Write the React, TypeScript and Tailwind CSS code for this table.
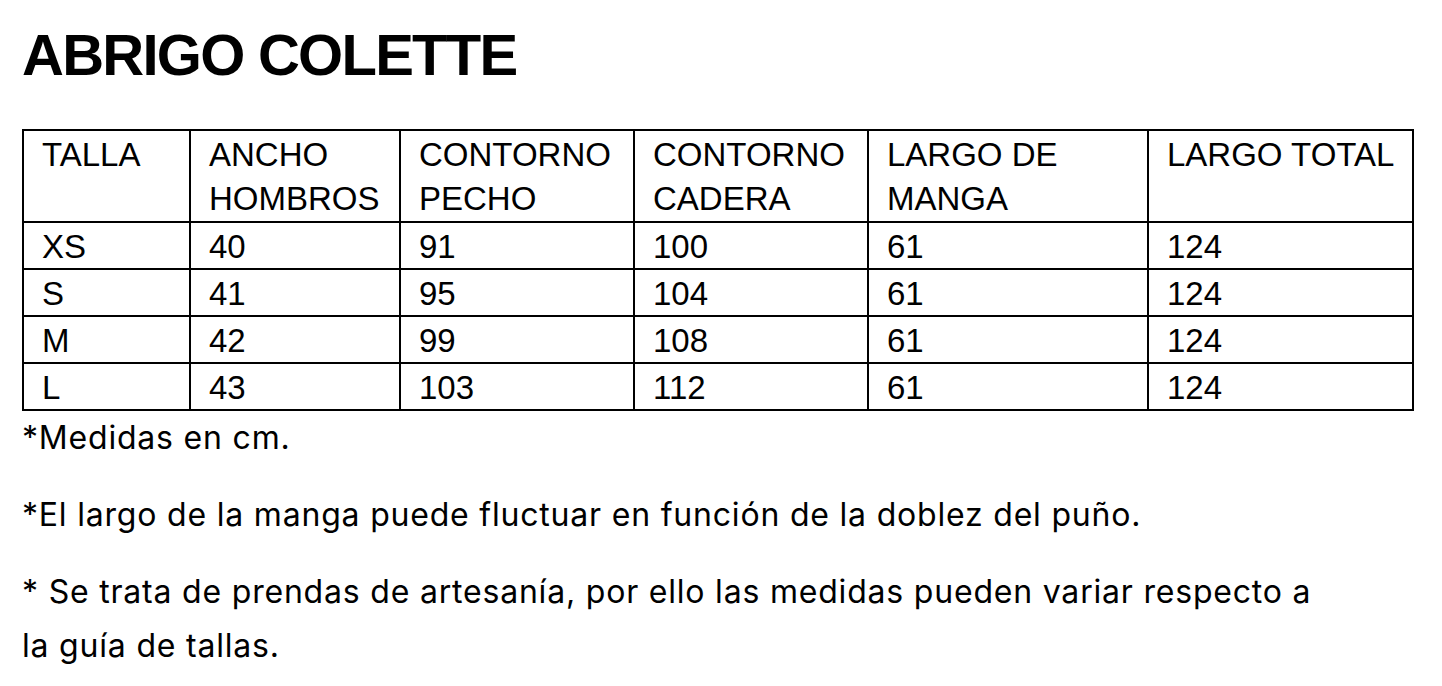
const headers = [
  ["TALLA"],
  ["ANCHO", "HOMBROS"],
  ["CONTORNO", "PECHO"],
  ["CONTORNO", "CADERA"],
  ["LARGO DE", "MANGA"],
  ["LARGO TOTAL"],
];

const rows = [
  ["XS", "40", "91", "100", "61", "124"],
  ["S", "41", "95", "104", "61", "124"],
  ["M", "42", "99", "108", "61", "124"],
  ["L", "43", "103", "112", "61", "124"],
];

const colWidths = ["w-[167px]", "w-[210px]", "w-[234px]", "w-[234px]", "w-[280px]", "w-[265px]"];

const App = () => {
  return (
    <div className="min-h-screen bg-white text-black px-[22px] pt-[25px]">
      <h1 className="font-['Liberation_Sans',Arial,sans-serif] font-bold text-[58px] leading-[60px] tracking-[-0.03em]">
        ABRIGO COLETTE
      </h1>
      <table className="mt-[44px] w-[1390px] table-fixed border-collapse border-2 border-black font-['Liberation_Sans',Arial,sans-serif] text-[33px]">
        <colgroup>
          {colWidths.map((w, i) => (
            <col key={i} className={w} />
          ))}
        </colgroup>
        <thead>
          <tr>
            {headers.map((lines, i) => (
              <th
                key={i}
                className="border-2 border-black pl-[18px] pt-[2px] text-left align-top font-normal leading-[44px] whitespace-nowrap"
              >
                {lines.map((line) => (
                  <div key={line}>{line}</div>
                ))}
              </th>
            ))}
          </tr>
        </thead>
        <tbody>
          {rows.map((row) => (
            <tr key={row[0]}>
              {row.map((cell, i) => (
                <td key={i} className="border-2 border-black pl-[18px] pt-[2px] align-top leading-[43px]">
                  {cell}
                </td>
              ))}
            </tr>
          ))}
        </tbody>
      </table>
      <div className="font-['Inter','Noto_Sans',sans-serif] text-[32px] leading-[54px] tracking-[0.025em] max-w-[1310px]">
        <p>*Medidas en cm.</p>
        <p className="mt-[23px]">*El largo de la manga puede fluctuar en función de la doblez del puño.</p>
        <p className="mt-[23px]">
          * Se trata de prendas de artesanía, por ello las medidas pueden variar respecto a la guía de tallas.
        </p>
      </div>
    </div>
  );
};

export default App;
